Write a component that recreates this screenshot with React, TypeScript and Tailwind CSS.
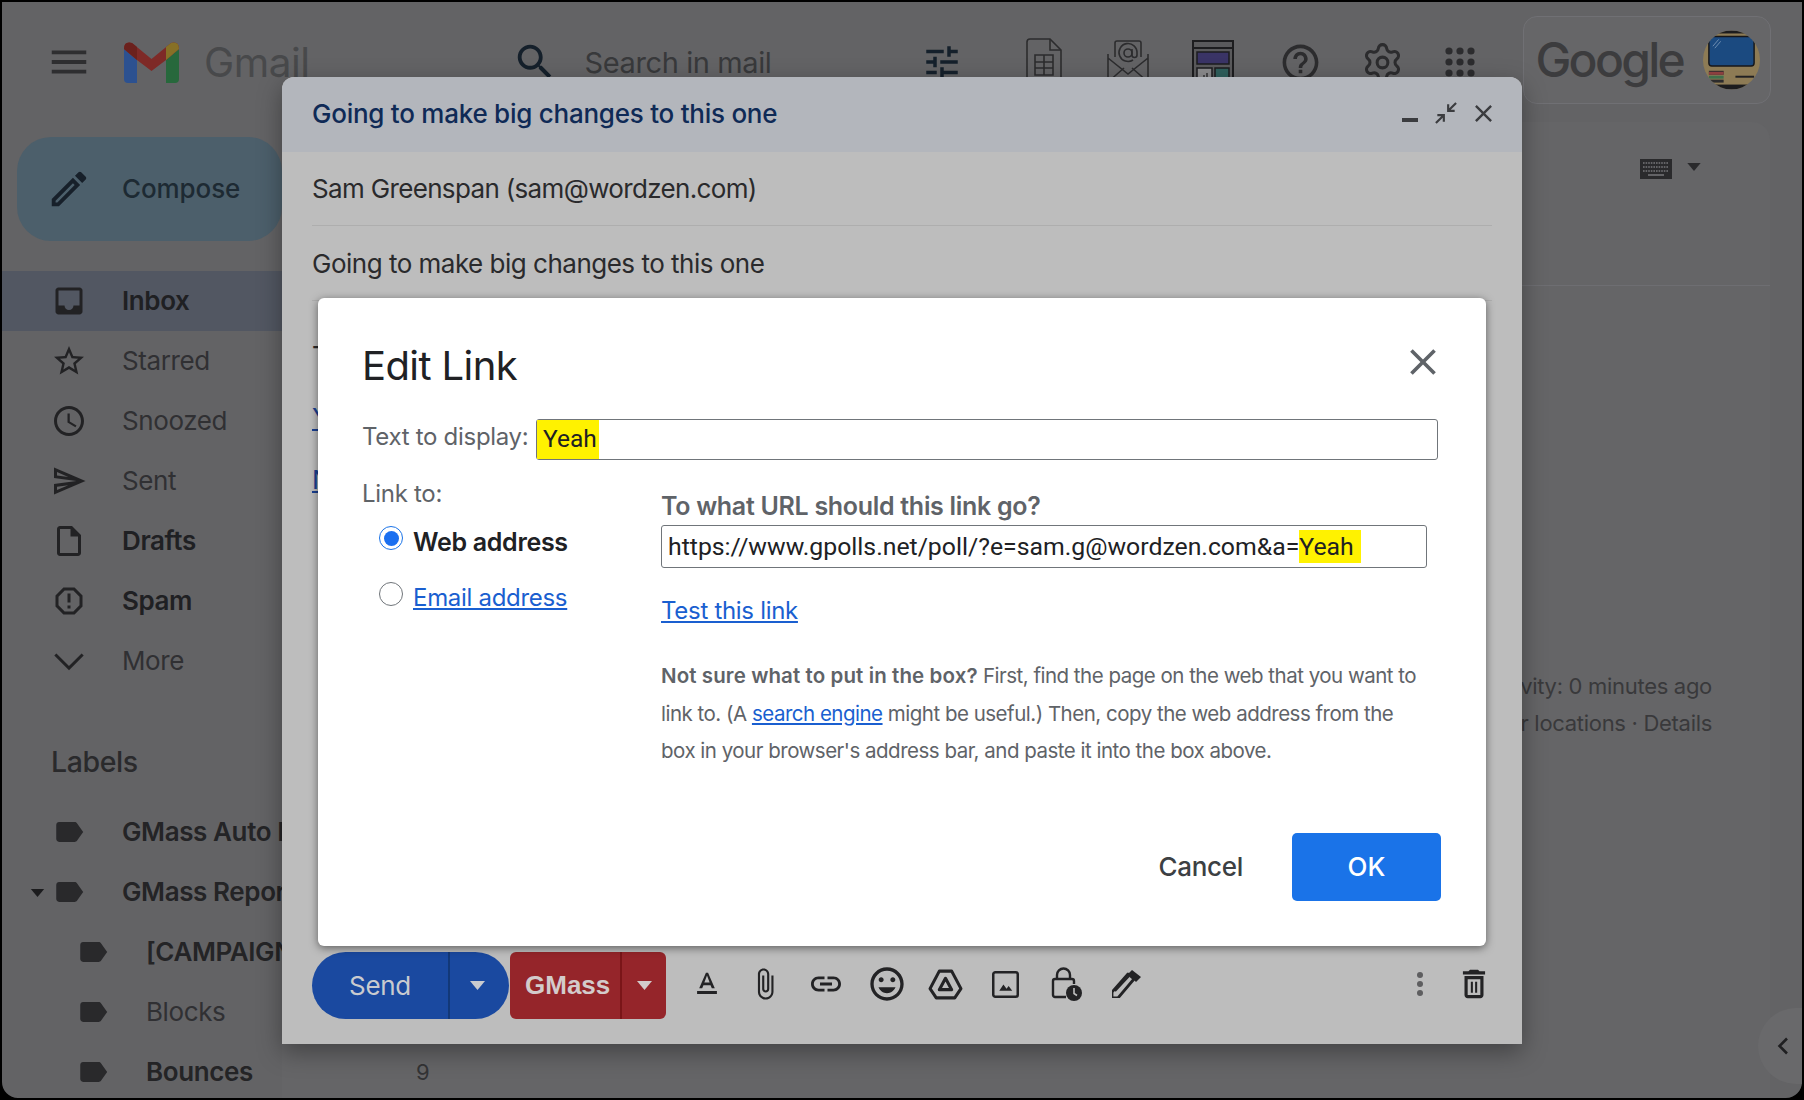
import React from 'react'
import { Settings } from 'lucide-react'

const P = {
  menu: 'M3 18h18v-2H3v2zm0-5h18v-2H3v2zm0-7v2h18V6H3z',
  search: 'M15.5 14h-.79l-.28-.27C15.41 12.59 16 11.11 16 9.5 16 5.91 13.09 3 9.5 3S3 5.91 3 9.5 5.91 16 9.5 16c1.61 0 3.09-.59 4.23-1.57l.27.28v.79l5 4.99L20.49 19l-4.99-5zm-6 0C7.01 14 5 11.99 5 9.5S7.01 5 9.5 5 14 7.01 14 9.5 11.99 14 9.5 14z',
  tune: 'M3 17v2h6v-2H3zM3 5v2h10V5H3zm10 16v-2h8v-2h-8v-2h-2v6h2zM7 9v2H3v2h4v2h2V9H7zm14 4v-2H11v2h10zm-6-4h2V7h4V5h-4V3h-2v6z',
  help: 'M11 18h2v-2h-2v2zm1-16C6.48 2 2 6.48 2 12s4.48 10 10 10 10-4.48 10-10S17.52 2 12 2zm0 18c-4.41 0-8-3.59-8-8s3.59-8 8-8 8 3.59 8 8-3.59 8-8 8zm0-14c-2.21 0-4 1.79-4 4h2c0-1.1.9-2 2-2s2 .9 2 2c0 2-3 1.75-3 5h2c0-2.25 3-2.5 3-5 0-2.21-1.79-4-4-4z',
  inbox: 'M19 3H5c-1.1 0-2 .9-2 2v14c0 1.1.9 2 2 2h14c1.1 0 2-.9 2-2V5c0-1.1-.9-2-2-2zm0 12h-4c0 1.66-1.35 3-3 3s-3-1.34-3-3H5V5h14v10z',
  star: 'M22 9.24l-7.19-.62L12 2 9.19 8.63 2 9.24l5.46 4.73L5.82 21 12 17.27 18.18 21l-1.63-7.03L22 9.24zM12 15.4l-3.76 2.27 1-4.28-3.32-2.88 4.38-.38L12 6.1l1.71 4.04 4.38.38-3.32 2.88 1 4.28L12 15.4z',
  clock: 'M11.99 2C6.47 2 2 6.48 2 12s4.47 10 9.99 10C17.52 22 22 17.52 22 12S17.52 2 11.99 2zM12 20c-4.42 0-8-3.58-8-8s3.58-8 8-8 8 3.58 8 8-3.58 8-8 8zm.5-13H11v6l5.25 3.15.75-1.23-4.5-2.67z',
  send: 'M4.01 6.03l7.51 3.22-7.52-1 .01-2.22m7.5 8.72L4 17.97v-2.22l7.51-1M2.01 3L2 10l15 2-15 2 .01 7L23 12 2.01 3z',
  draft: 'M14 2H6c-1.1 0-1.99.9-1.99 2L4 20c0 1.1.89 2 1.99 2H18c1.1 0 2-.9 2-2V8l-6-6zM6 20V4h7v5h5v11H6z',
  spam: 'M15.73 3H8.27L3 8.27v7.46L8.27 21h7.46L21 15.73V8.27L15.73 3zM19 14.9L14.9 19H9.1L5 14.9V9.1L9.1 5h5.8L19 9.1v5.8zM11 7h2v6h-2zm0 8h2v2h-2z',
  more: 'M3.6 7L12 15.4 20.4 7l1.4 1.4L12 18.2 2.2 8.4z',
  label: 'M17.63 5.84C17.27 5.33 16.67 5 16 5L5 5.01C3.9 5.01 3 5.9 3 7v10c0 1.1.9 1.99 2 1.99L16 19c.67 0 1.27-.33 1.63-.84L22 12l-4.37-6.16z',
  pen: 'M14.06 9.02l.92.92L5.92 19H5v-.92l9.06-9.06M17.66 3c-.25 0-.51.1-.7.29l-1.83 1.83 3.75 3.75 1.83-1.83c.39-.39.39-1.02 0-1.41l-2.34-2.34c-.2-.2-.45-.29-.71-.29zm-3.6 3.19L3 17.25V21h3.75L17.81 9.94l-3.75-3.75z',
  close: 'M19 6.41L17.59 5 12 10.59 6.41 5 5 6.41 10.59 12 5 17.59 6.41 19 12 13.41 17.59 19 19 17.59 13.41 12z',
  format: 'M5 17v2h14v-2H5zm4.5-4.2h5l.9 2.2h2.1L12.75 4h-1.5L6.5 15h2.1l.9-2.2zM12 5.98L13.87 11h-3.74L12 5.98z',
  clip: 'M16.5 6v11.5c0 2.21-1.79 4-4 4s-4-1.79-4-4V5c0-1.38 1.12-2.5 2.5-2.5s2.5 1.12 2.5 2.5v10.5c0 .55-.45 1-1 1s-1-.45-1-1V6H10v9.5c0 1.38 1.12 2.5 2.5 2.5s2.5-1.12 2.5-2.5V5c0-2.21-1.79-4-4-4S7 2.79 7 5v12.5c0 3.04 2.46 5.5 5.5 5.5s5.5-2.46 5.5-5.5V6h-1.5z',
  link: 'M3.9 12c0-1.71 1.39-3.1 3.1-3.1h4V7H7c-2.76 0-5 2.24-5 5s2.24 5 5 5h4v-1.9H7c-1.71 0-3.1-1.39-3.1-3.1zM8 13h8v-2H8v2zm9-6h-4v1.9h4c1.71 0 3.1 1.39 3.1 3.1s-1.39 3.1-3.1 3.1h-4V17h4c2.76 0 5-2.24 5-5s-2.24-5-5-5z',
  emoji: 'M11.99 2C6.47 2 2 6.48 2 12s4.47 10 9.99 10C17.52 22 22 17.52 22 12S17.52 2 11.99 2zM12 20c-4.42 0-8-3.58-8-8s3.58-8 8-8 8 3.58 8 8-3.58 8-8 8zm3.5-9c.83 0 1.5-.67 1.5-1.5S16.33 8 15.5 8 14 8.67 14 9.5s.67 1.5 1.5 1.5zm-7 0c.83 0 1.5-.67 1.5-1.5S9.33 8 8.5 8 7 8.67 7 9.5 7.67 11 8.5 11zm3.5 6.5c2.33 0 4.31-1.46 5.11-3.5H6.89c.8 2.04 2.78 3.5 5.11 3.5z',
  trash: 'M6 19c0 1.1.9 2 2 2h8c1.1 0 2-.9 2-2V7H6v12zM8 9h8v10H8V9zm2 1.5h1.3v7H10zm2.7 0H14v7h-1.3zM15.5 4l-1-1h-5l-1 1H5v2h14V4h-3.5z',
}

function Ico({ d, className }: { d: string; className?: string }) {
  return (
    <svg viewBox="0 0 24 24" fill="currentColor" className={className}>
      <path d={d} />
    </svg>
  )
}

function Caret({ className }: { className?: string }) {
  return <svg viewBox="0 0 10 6" fill="currentColor" className={className}><path d="M0 0h10L5 6z" /></svg>
}

function GmailLogo() {
  return (
    <svg viewBox="0 0 55 41" className="w-[55px] h-[41px] shrink-0">
      <path d="M0 7 L0 37 Q0 41 4 41 L13 41 L13 18 Z" fill="#2c5190" />
      <path d="M42 18 L42 41 L51 41 Q55 41 55 37 L55 7 Z" fill="#27683c" />
      <path d="M0 7 Q0 -1 8 1 L27.5 17 L47 1 Q55 -1 55 7 L55 7 L42 18 L27.5 29 L13 18 Z" fill="#7e2a27" />
      <path d="M0 7 Q0 -1 8 1 L13 5 L13 18 Z" fill="#6b211d" />
      <path d="M42 5 L47 1 Q55 -1 55 7 L42 18 Z" fill="#877026" />
    </svg>
  )
}

function Avatar() {
  return (
    <svg viewBox="0 0 58 60" className="w-[57px] h-[60px] shrink-0">
      <clipPath id="av"><ellipse cx="29" cy="30" rx="29" ry="30" /></clipPath>
      <g clipPath="url(#av)">
        <rect width="58" height="60" fill="#8d7b55" />
        <rect y="0" width="58" height="3" fill="#1c1c1e" />
        <rect x="6" y="6" width="46" height="30" rx="3" fill="#1b4a80" stroke="#17171a" strokeWidth="1.5" />
        <path d="M10 16 L16 9 M12 18 L18 11" stroke="#6f8fb3" strokeWidth="1" />
        <rect x="6" y="41" width="15" height="4" fill="#2b2b2d" />
        <rect x="6" y="42" width="15" height="3" fill="#8c3f3f" />
        <rect x="6" y="46" width="15" height="3" fill="#3f6f4b" />
        <rect x="6" y="50" width="15" height="3" fill="#2b2b2d" />
        <rect x="33" y="46" width="19" height="2" fill="#202022" />
        <rect y="55" width="58" height="5" fill="#1c1c1e" />
      </g>
    </svg>
  )
}

function NavRow({ d, text, bold, active }: { d: string; text: string; bold?: boolean; active?: boolean }) {
  return (
    <div className={`flex items-center h-[60px] ${active ? 'bg-[#525762]' : ''}`}>
      <Ico d={d} className="w-[36px] h-[36px] ml-[49px] shrink-0 text-[#222224]" />
      <span className={`ml-[35px] pb-[2px] text-[26px] whitespace-nowrap tracking-[-0.4px] ${bold ? 'font-semibold text-[#1f2023]' : 'text-[#303033]'}`}>{text}</span>
    </div>
  )
}

function LabelRow({ text, bold, sub, caret, count }: { text: string; bold?: boolean; sub?: boolean; caret?: boolean; count?: string }) {
  return (
    <div className="flex items-center h-[60px] relative">
      {caret && <Caret className="absolute left-[28px] top-[27px] w-[15px] h-[8px] text-[#1c1c1e]" />}
      <Ico d={P.label} className={`w-[34px] h-[34px] shrink-0 text-[#29292b] ${sub ? 'ml-[74px]' : 'ml-[50px]'}`} />
      <span className={`ml-[36px] pb-[2px] text-[26px] whitespace-nowrap tracking-[-0.4px] ${bold ? 'font-semibold text-[#242426]' : 'text-[#303033]'}`}>{text}</span>
      {count && <span className="absolute left-[414px] text-[22px] text-[#333335]">{count}</span>}
    </div>
  )
}

function Radio({ checked }: { checked?: boolean }) {
  return (
    <span className={`w-[24px] h-[24px] rounded-full border-[1.5px] shrink-0 flex items-center justify-center bg-white ${checked ? 'border-[#1a73e8]' : 'border-[#70757a]'}`}>
      {checked && <span className="w-[15px] h-[15px] rounded-full bg-[#1a6ff0]" />}
    </span>
  )
}

function Toolbar() {
  const c = 'text-[#232325] shrink-0 -mt-[3px]'
  return (
    <div className="flex items-center h-[67px] mb-[25px] ml-[30px] mr-[29px]">
      <div className="flex items-center w-[197px] h-[67px] rounded-full bg-[#1a49a0] text-[#c9cbcf] text-[26px] shrink-0">
        <span className="w-[136px] pl-[37px] tracking-[-0.3px]">Send</span>
        <span className="w-[1.5px] h-full bg-[#123878]" />
        <Caret className="ml-[20px] w-[15px] h-[9px]" />
      </div>
      <div className="flex items-center w-[156px] h-[67px] ml-px rounded-[6px] bg-[#95252a] text-[#d3cbcb] shrink-0">
        <span className="w-[110px] pl-[15px] text-[26px] font-bold font-['Liberation_Sans',sans-serif]">GMass</span>
        <span className="w-[1.5px] h-full bg-[#7a1518]" />
        <Caret className="ml-[15px] w-[15px] h-[9px]" />
      </div>
      <Ico d={P.format} className={`w-[34px] h-[34px] ml-[24px] ${c}`} />
      <Ico d={P.clip} className={`w-[34px] h-[34px] ml-[24px] ${c}`} />
      <Ico d={P.link} className={`w-[36px] h-[36px] ml-[26px] ${c}`} />
      <Ico d={P.emoji} className={`w-[40px] h-[40px] ml-[23px] ${c}`} />
      <svg viewBox="0 0 34 30" fill="none" stroke="currentColor" strokeWidth="3" strokeLinejoin="round" className={`w-[35px] h-[31px] ml-[21px] ${c}`}>
        <path d="M11 2h12l9 17-6 9H8l-6-9z" />
        <path d="M17 9l6 11H11z" />
      </svg>
      <svg viewBox="0 0 26 26" className={`w-[27px] h-[27px] ml-[29px] ${c}`}>
        <rect x="1.2" y="1.2" width="23.6" height="23.6" rx="2" fill="none" stroke="currentColor" strokeWidth="2.4" />
        <path d="M7 19l4-6 3 4 2-2.5 3.5 4.5z" fill="currentColor" />
      </svg>
      <svg viewBox="0 0 32 34" className={`w-[32px] h-[34px] ml-[32px] ${c}`}>
        <path d="M6 12V8a6.5 6.5 0 0 1 13 0v4" fill="none" stroke="currentColor" strokeWidth="2.4" />
        <path d="M15 30H4a2 2 0 0 1-2-2V14a2 2 0 0 1 2-2h17a2 2 0 0 1 2 2v3" fill="none" stroke="currentColor" strokeWidth="2.4" />
        <circle cx="23" cy="26" r="8" fill="currentColor" />
        <path d="M23 21v5.5l3 2" stroke="#bdbdbd" strokeWidth="1.6" fill="none" />
      </svg>
      <svg viewBox="0 0 29 28" className={`w-[29px] h-[28px] ml-[29px] ${c}`}>
        <path d="M0 28v-6L16 4l6 5L6 28z" fill="none" stroke="currentColor" strokeWidth="2.8" strokeLinejoin="round" />
        <path d="M16 4l4-4 9 7-5 5z" fill="currentColor" />
        <path d="M3 21L17 6" stroke="currentColor" strokeWidth="2" />
      </svg>
      <svg viewBox="0 0 8 24" fill="#5e5e60" className="w-[8px] h-[24px] ml-auto -mt-[3px] shrink-0">
        <circle cx="4" cy="3" r="3" /><circle cx="4" cy="12" r="3" /><circle cx="4" cy="21" r="3" />
      </svg>
      <Ico d={P.trash} className={`w-[38px] h-[38px] ml-[31px] ${c}`} />
    </div>
  )
}

function EditLinkDialog() {
  return (
    <div className="absolute left-[36px] top-[221px] w-[1168px] h-[648px] rounded-[6px] bg-white shadow-[0_2px_8px_rgba(0,0,0,0.5)] pl-[44px] pt-[42px] text-[#5f6368]">
      <div className="flex items-start h-[79px]">
        <h1 className="text-[40px] leading-[52px] text-[#202124] tracking-[-0.6px]">Edit Link</h1>
        <Ico d={P.close} className="w-[44px] h-[44px] ml-[884px] text-[#5f6368]" />
      </div>

      <div className="flex items-center h-[41px]">
        <span className="w-[174px] pb-[6px] text-[24px] whitespace-nowrap tracking-[-0.3px]">Text to display:</span>
        <div className="w-[902px] h-[41px] rounded-[3px] border-[1.5px] border-[#70757a] flex items-center">
          <span className="bg-[#fff200] h-full w-[62px] pl-[6px] text-[24.5px] leading-[38px] text-[#202124] font-['Roboto',sans-serif]">Yeah</span>
        </div>
      </div>

      <div className="flex mt-[16px]">
        <div className="w-[299px]">
          <div className="text-[24px] leading-[36px] tracking-[-0.3px]">Link to:</div>
          <div className="flex items-center ml-[17px] mt-[6px] h-[40px]">
            <Radio checked />
            <span className="ml-[10px] text-[25px] font-semibold text-[#202124] tracking-[-0.3px] whitespace-nowrap mt-[9px]">Web address</span>
          </div>
          <div className="flex items-center ml-[17px] mt-[16px] h-[40px]">
            <Radio />
            <span className="ml-[10px] text-[24px] text-[#1a5fd0] underline tracking-[-0.3px] whitespace-nowrap mt-[7px]">Email address</span>
          </div>
        </div>

        <div className="w-[780px]">
          <div className="text-[25px] leading-[36px] mt-[12px] font-semibold tracking-[-0.3px] whitespace-nowrap">To what URL should this link go?</div>
          <div className="w-[766px] h-[43px] mt-[1px] rounded-[3px] border-[1.5px] border-[#70757a] flex items-center pl-[6px] text-[24.8px] text-[#202124] font-['Roboto',sans-serif] whitespace-nowrap">
            <span className="pt-[1px]">https://www.gpolls.net/poll/?e=sam.g@wordzen.com&amp;a=</span>
            <span className="bg-[#fff200] w-[62px] leading-[32px] pt-[1px]">Yeah</span>
          </div>
          <div className="mt-[25px] w-fit text-[24px] leading-[36px] text-[#1a5fd0] underline tracking-[-0.3px]">Test this link</div>
          <p className="mt-[28px] w-[780px] text-[20.5px] leading-[37.5px] tracking-[-0.5px]">
            <b className="font-semibold tracking-[0.1px]">Not sure what to put in the box?</b> First, find the page on the web that you want to
            <br />
            link to. (A <span className="text-[#1a5fd0] underline">search engine</span> might be useful.) Then, copy the web address from the
            <br />
            box in your browser's address bar, and paste it into the box above.
          </p>
        </div>
      </div>

      <div className="absolute right-[45px] bottom-[45px] flex items-center">
        <span className="text-[26px] pb-[2px] font-medium text-[#3c4043] tracking-[-0.3px] mr-[49px]">Cancel</span>
        <span className="w-[149px] h-[68px] pb-[2px] rounded-[5px] bg-[#1a73e8] text-white text-[26px] font-medium flex items-center justify-center">OK</span>
      </div>
    </div>
  )
}

function ComposeWindow() {
  return (
    <div className="absolute left-[280px] top-[75px] w-[1240px] h-[967px] flex flex-col rounded-t-[12px] bg-[#bdbdbd] shadow-[0_8px_24px_rgba(0,0,0,0.35)]">
      <div className="h-[75px] shrink-0 rounded-t-[12px] bg-[#b3b6bc] flex items-center pl-[30px] pr-[24px]">
        <span className="text-[26px] pb-[2px] font-medium text-[#0f2a56] tracking-[-0.25px]">Going to make big changes to this one</span>
        <span className="ml-auto w-[16px] h-[4px] mt-[11px] bg-[#3b3c3f]" />
        <svg viewBox="0 0 24 24" fill="#3b3c3f" className="w-[26px] h-[26px] ml-[15px] -mt-[3px] shrink-0">
          <path d="M22 3.4L20.6 2 15 7.6V4h-2v7h7V9h-3.6zM2 20.6L3.4 22 9 16.4V20h2v-7H4v2h3.6z" />
        </svg>
        <Ico d={P.close} className="w-[29px] h-[29px] ml-[10px] -mt-[2px] text-[#3b3c3f]" />
      </div>
      <div className="mx-[30px] h-[74px] shrink-0 flex items-center border-b border-[#aeaeae] text-[26px] text-[#2a2a2c] tracking-[-0.66px]">Sam Greenspan (sam@wordzen.com)</div>
      <div className="mx-[30px] h-[75px] shrink-0 flex items-center border-b border-[#aeaeae] text-[26px] text-[#2a2a2c] tracking-[-0.5px]">Going to make big changes to this one</div>
      <div className="ml-[30px] text-[26px] leading-[62px] flex-1 pt-[24px] overflow-hidden">
        <div className="w-fit text-[#2a2a2c]">T</div>
        <div className="w-fit text-[#1a3f91] underline">Y</div>
        <div className="w-fit text-[#1a3f91] underline">N</div>
      </div>
      <Toolbar />
      <EditLinkDialog />
    </div>
  )
}

export default function App() {
  return (
    <div className="w-[1804px] h-[1100px] bg-black">
      <div className="relative w-[1804px] h-[1100px] border-2 border-black rounded-b-[18px] overflow-hidden bg-[#636365] font-['Inter',sans-serif] flex flex-col">
        {/* Top bar */}
        <header className="flex items-center h-[120px] shrink-0">
          <Ico d={P.menu} className="w-[46px] h-[46px] ml-[44px] shrink-0 text-[#2e2e30]" />
          <div className="ml-[32px]"><GmailLogo /></div>
          <span className="ml-[25px] pt-[2px] text-[40.5px] text-[#48494b] tracking-[-0.5px]">Gmail</span>
          <Ico d={P.search} className="w-[46px] h-[46px] ml-[202px] text-[#15202b]" />
          <span className="ml-[27px] pt-[2px] text-[29px] text-[#38393b] tracking-[-0.4px]">Search in mail</span>
          <Ico d={P.tune} className="w-[42px] h-[42px] ml-[150px] text-[#15202b]" />
          <svg viewBox="0 0 36 44" fill="none" stroke="#2c2c2e" strokeWidth="1.6" className="w-[36px] h-[44px] ml-[63px] shrink-0 -mt-[4px]">
            <path d="M4 1h20l11 11v31H1V4a3 3 0 0 1 3-3z" />
            <path d="M24 1v11h11" />
            <path d="M9 17h18v20H9zM9 24h18M9 30h18M18 17v20" />
          </svg>
          <svg viewBox="0 0 42 44" fill="none" stroke="#2c2c2e" strokeWidth="1.6" className="w-[42px] h-[44px] ml-[45px] shrink-0">
            <path d="M8 17V3a2 2 0 0 1 2-2h22a2 2 0 0 1 2 2v14" />
            <path d="M1 14v28h40V14M1 42l16-14M41 42L25 28M1 18l20 16 20-16" />
            <circle cx="21" cy="13" r="4" /><path d="M25 9v6a2.5 2.5 0 0 0 5 0v-2a9 9 0 1 0-4 7" />
          </svg>
          <svg viewBox="0 0 42 44" className="w-[42px] h-[44px] ml-[43px] shrink-0">
            <rect x="1" y="1" width="40" height="43" fill="#5a5a5c" stroke="#1d1d1f" strokeWidth="2" />
            <rect x="1" y="1" width="40" height="7" fill="#5a5a5c" stroke="#1d1d1f" strokeWidth="2" />
            <rect x="5" y="12" width="32" height="12" fill="#3a3466" stroke="#1d1d1f" strokeWidth="1.5" />
            <rect x="5" y="28" width="15" height="16" fill="#8b8b8d" stroke="#1d1d1f" strokeWidth="1.5" />
            <rect x="23" y="28" width="14" height="16" fill="#2f5f5c" stroke="#1d1d1f" strokeWidth="1.5" />
            <path d="M9 42v-4M12 42v-7M15 42v-9" stroke="#1d1d1f" strokeWidth="1.2" />
          </svg>
          <Ico d={P.help} className="w-[43px] h-[43px] ml-[45px] text-[#2c2c2e]" />
          <Settings className="w-[43px] h-[43px] ml-[39px] shrink-0 text-[#2c2c2e]" strokeWidth={1.7} />
          <svg viewBox="0 0 30 30" fill="#2c2c2e" className="w-[30px] h-[30px] ml-[41px] shrink-0">
            {[4, 15, 26].map((y) => [4, 15, 26].map((x) => <circle key={`${x}-${y}`} cx={x} cy={y} r="3.6" />))}
          </svg>
          <div className="ml-[48px] w-[248px] h-[88px] -mt-[4px] shrink-0 rounded-[14px] border border-[#707074] bg-[#666668] flex items-center pl-[11px]">
            <span className="text-[48px] text-[#3c3c3e] tracking-[-2.7px] font-medium">Google</span>
            <span className="ml-auto mr-[10px]"><Avatar /></span>
          </div>
        </header>

        <div className="flex flex-1 min-h-0">
          {/* Sidebar */}
          <aside className="w-[280px] shrink-0">
            <div className="ml-[15px] mt-[15px] h-[104px] w-[265px] rounded-[34px] bg-[#4c5f6b] flex items-center">
              <Ico d={P.pen} className="w-[46px] h-[46px] ml-[29px] shrink-0 text-[#17202a]" />
              <span className="ml-[30px] pb-[2px] text-[26px] font-medium text-[#1d2a33] tracking-[-0.1px] whitespace-nowrap">Compose</span>
            </div>
            <div className="mt-[30px]">
              <NavRow d={P.inbox} text="Inbox" bold active />
              <NavRow d={P.star} text="Starred" />
              <NavRow d={P.clock} text="Snoozed" />
              <NavRow d={P.send} text="Sent" />
              <NavRow d={P.draft} text="Drafts" bold />
              <NavRow d={P.spam} text="Spam" bold />
              <NavRow d={P.more} text="More" />
            </div>
            <div className="h-[60px] mt-[41px] flex items-center pl-[49px] text-[28.5px] font-medium text-[#2a2a2c] tracking-[-0.4px]">Labels</div>
            <div className="mt-[10px] w-[500px]">
              <LabelRow text="GMass Auto Followup" bold />
              <LabelRow text="GMass Reports" bold caret />
              <LabelRow text="[CAMPAIGNS]" bold sub />
              <LabelRow text="Blocks" sub />
              <LabelRow text="Bounces" bold sub count="9" />
            </div>
          </aside>

          {/* Mail pane, only its right edge shows past the compose window */}
          <main className="flex-1 mr-[32px] rounded-tr-[18px] bg-[#656567] flex flex-col items-end text-[#39393b]">
            <div className="flex items-center mt-[37px] mr-[69px]">
              <svg viewBox="0 0 32 20" className="w-[32px] h-[20px]">
                <rect width="32" height="20" fill="#2a2a2c" />
                <path d="M3 4h26M3 8h26M3 12h26" stroke="#77777a" strokeWidth="1.6" strokeDasharray="1.6 1" />
                <path d="M8 16h16" stroke="#77777a" strokeWidth="1.6" />
              </svg>
              <Caret className="ml-[15px] w-[14px] h-[8px] text-[#2a2a2c] -mt-[4px]" />
            </div>
            <div className="w-full mr-[27px] border-b border-[#6e6e72] mt-[106px] self-stretch" />
            <div className="mt-[382px] mr-[58px] text-[22px] leading-[37px] text-right whitespace-nowrap tracking-[-0.3px]">
              <div>vity: 0 minutes ago</div>
              <div>r locations · Details</div>
            </div>
          </main>
        </div>

        <ComposeWindow />

        {/* Side panel toggle */}
        <div className="absolute right-[-40px] top-[1006px] w-[84px] h-[76px] rounded-full bg-[#69696b] flex items-center pl-[19px]">
          <svg viewBox="0 0 12 18" fill="none" stroke="#1f1f21" strokeWidth="2.6" className="w-[12px] h-[18px]"><path d="M10 1.5L2.5 9l7.5 7.5" /></svg>
        </div>
      </div>
    </div>
  )
}
